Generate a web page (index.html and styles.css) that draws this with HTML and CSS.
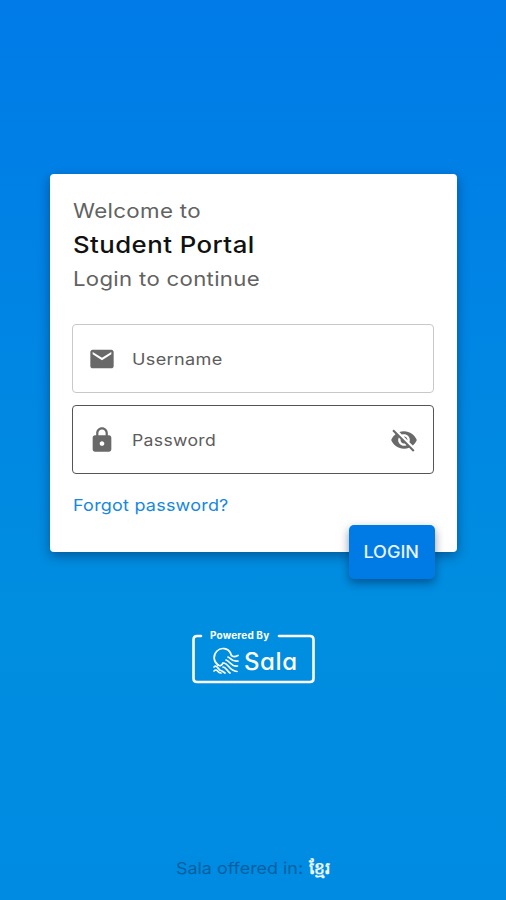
FILE: index.html
```html
<!DOCTYPE html>
<html lang="en">
<head>
<meta charset="utf-8">
<title>Student Portal</title>
<link rel="stylesheet" href="styles.css">
</head>
<body>
<main class="page">
  <form class="card">
    <div class="welcome"><span>Welcome to</span></div>
    <h1 class="title"><span>Student Portal</span></h1>
    <div class="subtitle"><span>Login to continue</span></div>
    <div class="field">
      <svg class="icon" viewBox="0 0 24 24"><path d="M20 4H4c-1.100 0-2 .9-2 2v12c0 1.100.9 2 2 2h16c1.100 0 2-.9 2-2V6c0-1.100-.9-2-2-2zm0 4l-8 5-8-5V6l8 5 8-5v2z"/></svg>
      <span class="label username">Username</span>
    </div>
    <div class="field active">
      <svg class="icon" viewBox="0 0 24 24"><path d="M18 8h-1V6c0-2.760-2.240-5-5-5S7 3.240 7 6v2H6c-1.100 0-2 .9-2 2v10c0 1.100.9 2 2 2h12c1.100 0 2-.9 2-2V10c0-1.100-.9-2-2-2zm-6 9c-1.100 0-2-.9-2-2s.9-2 2-2 2 .9 2 2-.9 2-2 2zm3.100-9H8.900V6c0-1.710 1.390-3.100 3.100-3.100s3.100 1.390 3.100 3.100v2z"/></svg>
      <span class="label password">Password</span>
      <svg class="icon eye" viewBox="0 0 24 24"><path d="M12 7c2.760 0 5 2.240 5 5 0 .65-.13 1.260-.36 1.830l2.920 2.920c1.510-1.260 2.700-2.890 3.430-4.750-1.730-4.390-6-7.500-11-7.500-1.400 0-2.740.25-3.980.7l2.160 2.160C10.740 7.130 11.350 7 12 7zM2 4.270l2.280 2.280.46.46C3.080 8.300 1.780 10.020 1 12c1.730 4.390 6 7.500 11 7.500 1.550 0 3.030-.3 4.380-.84l.42.42L19.730 22 21 20.730 3.270 3 2 4.270zM7.530 9.800l1.550 1.550c-.05.21-.08.43-.08.65 0 1.660 1.340 3 3 3 .22 0 .44-.03.65-.08l1.550 1.550c-.67.33-1.410.53-2.200.53-2.760 0-5-2.240-5-5 0-.79.2-1.530.53-2.200zm4.310-.78l3.150 3.150.02-.16c0-1.660-1.340-3-3-3l-.17.01z"/></svg>
    </div>
    <a class="forgot"><span>Forgot password?</span></a>
    <button class="login" type="button"><span>LOGIN</span></button>
  </form>
  <div class="brand">
    <svg class="frame" viewBox="0 0 124 54" fill="none" stroke="#fff" stroke-width="2.600" stroke-linecap="round"><path d="M10 5H6Q2.500 5 2.500 8.500V47.500Q2.500 51 6 51H119Q122.500 51 122.500 47.500V8.500Q122.500 5 119 5H88"/></svg>
    <span class="powered">Powered By</span>
    <div class="logo">
      <svg class="mark" viewBox="0 0 28 28" fill="none" stroke="#fff" stroke-width="1.700" stroke-linecap="round" stroke-linejoin="round"><path d="M6 18C1 14 1 8 5 4C9 0 16 1 18.500 6C19 9 21 11 26 8.500"/><path d="M16 10C19 11 19 15 26 14M14 13C18 14 19 20 25.500 19M12 16C17 17 17 24 25 24.500M11 20C14 20 15 24 18 26M6 18Q9 20 11 16M2 20Q4 18 6 21T10 24L13 26M2 24Q4 22 5.500 24T9 26"/></svg>
      <span class="sala">Sala</span>
    </div>
  </div>
  <footer class="languages"><span class="offered">Sala offered in:</span><span class="khmer" lang="km">ខ្មែរ</span></footer>
</main>
</body>
</html>
```
FILE: styles.css
```css
* { box-sizing: border-box; }
body { margin: 0; font-family: Inter, "Liberation Sans", sans-serif; }
.page {
  width: 506px; height: 900px; padding-top: 174px;
  display: flex; flex-direction: column; align-items: center;
  background: linear-gradient(#007be8 0%, #008ee0 68%, #008be2 100%);
}
.card {
  position: relative; width: 407px; height: 378px; margin: 0; padding: 22px 23px 0;
  display: flex; flex-direction: column; flex-shrink: 0;
  background: #fff; border-radius: 4px;
  box-shadow: 0 4px 12px rgba(0, 35, 75, .48);
}
/* Widened letterforms */
.welcome span, .title span, .subtitle span, .label, .forgot span, .login span, .offered {
  display: inline-block; transform-origin: left center; white-space: nowrap;
}
.welcome, .subtitle { height: 30px; line-height: 30px; font-size: 20px; font-weight: 400; color: #626262; letter-spacing: .3px; }
.welcome span { transform: scaleX(1.115); }
.title { margin: 0; height: 38px; line-height: 38px; font-size: 23px; font-weight: 500; letter-spacing: .4px; color: #111; }
.title span { transform: scaleX(1.12); }
.subtitle { height: 60px; line-height: 30px; }
.subtitle span { transform: scaleX(1.107); }
.field {
  height: 69px; flex-shrink: 0; padding: 0 15px 0 15px; margin-left: -.5px;
  display: flex; align-items: center;
  border: 1px solid #c8c8c8; border-radius: 4px;
}
.active { margin-top: 12px; border-color: #555; }
.icon { width: 28px; height: 28px; fill: #696969; }
.label { margin-left: 16px; font-size: 16px; color: #5c5c5c; letter-spacing: .3px; }
.username { transform: scaleX(1.13); }
.password { transform: scaleX(1.1); }
.eye { margin-left: auto; }
.forgot { margin-top: 20px; line-height: 22px; font-size: 16.500px; color: #1688df; letter-spacing: .2px; }
.forgot span { transform: scaleX(1.09); }
.login {
  position: absolute; right: 22px; bottom: -27px; width: 86px; height: 54px; padding: 0;
  border: 0; border-radius: 5px; background: #007ae5; color: #e8f3ff;
  font: 500 17px Inter, sans-serif;
  box-shadow: 0 4px 10px rgba(0, 20, 50, .45);
}
.login span { transform: scaleX(1.06); transform-origin: center; }
.brand { position: relative; width: 124px; height: 54px; margin-top: 79px; flex-shrink: 0; color: #fff; }
.frame { position: absolute; inset: 0; width: 124px; height: 54px; }
.powered { position: absolute; left: 19px; top: -2px; font-size: 10px; line-height: 13px; font-weight: 700; letter-spacing: .15px; white-space: nowrap; }
.logo { display: flex; align-items: center; padding: 13px 0 0 21px; }
.mark { width: 28px; height: 28px; }
.sala { margin: 3px 0 0 4px; font: 500 24px/30px Inter, sans-serif; font-feature-settings: "cv11"; letter-spacing: .6px; }
.languages { margin-top: auto; height: 44px; display: flex; line-height: 25px; }
.offered { width: 133px; font-size: 16.500px; color: #05609f; transform: scaleX(1.085); }
.khmer { font-size: 17px; font-weight: 700; color: #e7f5ff; }
```
